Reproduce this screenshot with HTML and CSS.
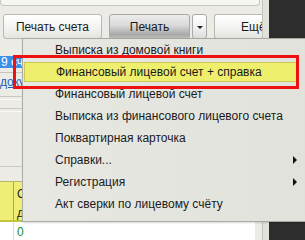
FILE: index.html
```html
<!DOCTYPE html>
<html>
<head>
  <meta charset="utf-8">
  <title>Печать</title>
  <link rel="stylesheet" href="styles.css">
</head>
<body>
  <div class="page">
    <div class="main">
      <div class="top-panel"><div class="top-box"></div></div>

      <div class="toolbar">
        <button class="btn btn-print-bill">Печать счета</button>
        <div class="split">
          <button class="btn btn-print">Печать</button>
          <button class="btn btn-arrow"><span class="tri"></span></button>
        </div>
        <button class="btn btn-more">Ещё</button>
      </div>

      <div class="content">
        <div class="field"><span class="selected">9 счета</span></div>
        <div class="link-row"><a class="doc-link">документы</a></div>
        <div class="sep"></div>
        <div class="sep"></div>
        <div class="spacer"></div>
        <div class="grid">
          <div class="grid-head">
            <div class="cell cell-num"></div>
            <div class="cell cell-main">О<br>д</div>
          </div>
          <div class="grid-row">
            <div class="cell-num"></div>
            <div class="cell-val">0</div>
          </div>
        </div>
      </div>
    </div>
    <div class="side-strip"></div>
    <div class="dark-col"></div>
  </div>

  <!-- выпадающее меню кнопки "Печать" -->
  <ul class="menu">
    <li>Выписка из домовой книги</li>
    <li class="active">Финансовый лицевой счет + справка</li>
    <li>Финансовый лицевой счет</li>
    <li>Выписка из финансового лицевого счета</li>
    <li>Поквартирная карточка</li>
    <li class="sub">Справки...</li>
    <li class="sub">Регистрация</li>
    <li>Акт сверки по лицевому счёту</li>
  </ul>
  <div class="mark"></div>
</body>
</html>
```

FILE: styles.css
```css
body {
  margin: 0;
  width: 305px;
  height: 240px;
  overflow: hidden;
  font-family: "Liberation Sans", Arial, sans-serif;
  font-size: 12px;
  color: #1b1b1b;
  background-color: #ecebe5;
}

.page {
  display: flex;
  height: 240px;
}

.main {
  width: 262px;
  flex-shrink: 0;
  display: flex;
  flex-direction: column;
}

.top-panel {
  height: 6px;
}

.top-box {
  height: 5px;
  width: 258px;
  border: 1px solid #c8c7c0;
  border-top: none;
  border-radius: 0 0 4px 4px;
  background-color: #f6f6f2;
}

.toolbar {
  display: flex;
  gap: 7px;
  padding: 8px 0 0 3px;
  height: 25px;
}

.btn {
  flex-shrink: 0;
  height: 25px;
  padding: 0;
  font-family: "Liberation Sans", Arial, sans-serif;
  font-size: 12px;
  color: #1b1b1b;
  border: 1px solid #b9b9b4;
  border-radius: 3px;
  background: linear-gradient(#ffffff, #f3f3f1 55%, #e4e4e0);
}

.btn-print-bill {
  width: 99px;
}

.split {
  display: flex;
  gap: 2px;
}

.btn-print {
  width: 81px;
  border-color: #a9a9a6;
  background: linear-gradient(#ececec, #dadada 45%, #a8a8a8 85%, #bdbdbd);
}

.btn-arrow {
  width: 15px;
  border-color: #a9a9a6;
  background: linear-gradient(#ffffff, #f1f1f1 55%, #dcdcdc);
}

.tri {
  display: inline-block;
  border-left: 3px solid transparent;
  border-right: 3px solid transparent;
  border-top: 3px solid #222;
  vertical-align: middle;
}

.btn-more {
  width: 48px;
  text-align: left;
  padding-left: 26px;
  white-space: nowrap;
  border-right: none;
  border-radius: 3px 0 0 3px;
}

.content {
  flex: 1;
  display: flex;
  flex-direction: column;
  padding-top: 16px;
}

.field {
  height: 12px;
  border-bottom: 1px dotted #2b5d9b;
}

.selected {
  display: inline-block;
  height: 12px;
  padding-left: 1px;
  line-height: 12px;
  color: #ffffff;
  background-color: #3a8fe8;
}

.link-row {
  margin-top: 4px;
  border-top: 1px solid #c5c5bf;
  height: 13px;
  padding-top: 2px;
}

.doc-link {
  color: #1d5fbf;
  text-decoration: underline;
}

.sep {
  margin-top: 8px;
  height: 2px;
  border-top: 1px solid #c9c9c3;
  border-bottom: 1px solid #f9f9f6;
}

.spacer {
  height: 54px;
  border-bottom: 1px solid #c9c9c3;
}

.grid {
  flex: 1;
  display: flex;
  flex-direction: column;
  width: 255px;
  padding-top: 14px;
}

.grid-head {
  display: flex;
  height: 38px;
  background-color: #efef78;
  border-top: 1px solid #b5b56a;
  border-bottom: 2px solid #c4c43a;
}

.cell {
  border-right: 1px solid #a8a85c;
}

.cell-num {
  width: 13px;
}

.cell-main {
  flex: 1;
  padding: 3px 0 0 3px;
  line-height: 19px;
}

.grid-row {
  flex: 1;
  display: flex;
  background-color: #ffffff;
}

.grid-row .cell-num {
  border-right: 1px solid #dcdcd6;
}

.cell-val {
  padding: 3px 0 0 3px;
  line-height: 14px;
  color: #1a8a2a;
}

.side-strip {
  width: 6px;
  border-left: 1px solid #c4c4be;
  background-color: #e2e2dc;
}

.dark-col {
  flex: 1;
  background-color: #2d2d2d;
}

.menu {
  position: absolute;
  left: 22px;
  top: 38px;
  width: 290px;
  margin: 0;
  padding: 0;
  list-style: none;
  border: 1px solid #a9a9a4;
  background: linear-gradient(90deg, #e8e8e3, #e1e2dc);
  box-shadow: 1px 1px 2px rgba(0, 0, 0, 0.15);
}

.menu li {
  position: relative;
  height: 22px;
  line-height: 22px;
  padding-left: 32px;
}

.menu li.active {
  margin: 1px 14px 1px 1px;
  height: 18px;
  line-height: 18px;
  padding-left: 31px;
  background-color: #efef6e;
  border: 1px solid #c9c95a;
}

.menu li.sub::after {
  content: "";
  position: absolute;
  left: 270px;
  top: 7px;
  border-top: 4px solid transparent;
  border-bottom: 4px solid transparent;
  border-left: 4px solid #111;
}

.menu li:last-child {
  margin-bottom: 6px;
}

.mark {
  position: absolute;
  left: 13px;
  top: 55px;
  width: 280px;
  height: 28px;
  border: 3px solid #ee1111;
}
```
